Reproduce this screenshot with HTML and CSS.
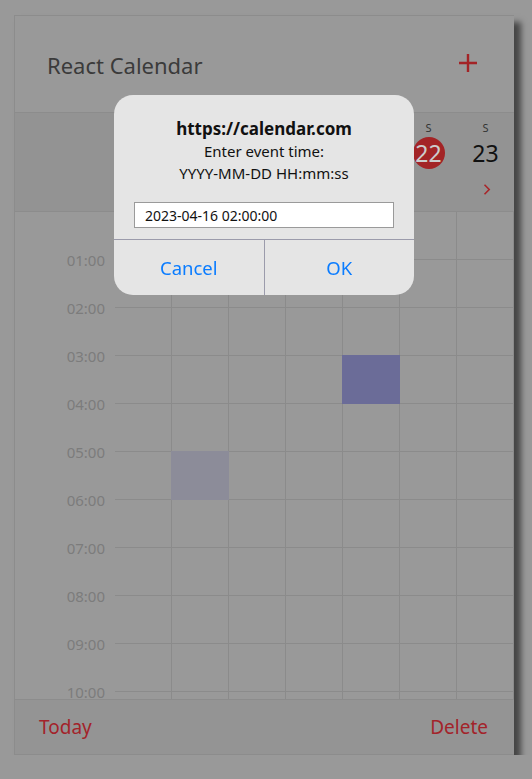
FILE: index.html
```html
<!DOCTYPE html>
<html lang="en">
<head>
<meta charset="utf-8">
<title>React Calendar</title>
<link rel="stylesheet" href="styles.css">
</head>
<body>
<div class="app">
  <header class="topbar">
    <h1 class="title">React Calendar</h1>
    <button class="add" aria-label="Add">
      <svg width="18" height="18" viewBox="0 0 18 18"><path d="M0 9H18M9 0V18" stroke="#a32326" stroke-width="2.4" fill="none"/></svg>
    </button>
  </header>

  <div class="week">
    <div class="week-spacer"></div>
    <div class="day"><span class="dow">M</span><span class="num">17</span><span class="nav"><svg width="8" height="11" viewBox="0 0 8 11"><path d="M6.5 0.8L1.8 5.5L6.5 10.2" stroke="#a8262a" stroke-width="1.6" fill="none"/></svg></span></div>
    <div class="day"><span class="dow">T</span><span class="num">18</span><span class="nav"></span></div>
    <div class="day"><span class="dow">W</span><span class="num">19</span><span class="nav"></span></div>
    <div class="day"><span class="dow">T</span><span class="num">20</span><span class="nav"></span></div>
    <div class="day"><span class="dow">F</span><span class="num">21</span><span class="nav"></span></div>
    <div class="day"><span class="dow">S</span><span class="num today">22</span><span class="nav"></span></div>
    <div class="day"><span class="dow">S</span><span class="num">23</span><span class="nav"><svg width="8" height="11" viewBox="0 0 8 11"><path d="M1.5 0.8L6.2 5.5L1.5 10.2" stroke="#a8262a" stroke-width="1.6" fill="none"/></svg></span></div>
  </div>

  <div class="body">
    <div class="times">
      <div class="time">01:00</div>
      <div class="time">02:00</div>
      <div class="time">03:00</div>
      <div class="time">04:00</div>
      <div class="time">05:00</div>
      <div class="time">06:00</div>
      <div class="time">07:00</div>
      <div class="time">08:00</div>
      <div class="time">09:00</div>
      <div class="time">10:00</div>
    </div>
    <div class="grid">
      <div class="event event-a"></div>
      <div class="event event-b"></div>
    </div>
  </div>

  <footer class="footer">
    <button class="link">Today</button>
    <button class="link">Delete</button>
  </footer>
</div>

<div class="dialog">
  <div class="dialog-title">https://calendar.com</div>
  <div class="dialog-msg">Enter event time:</div>
  <div class="dialog-msg">YYYY-MM-DD HH:mm:ss</div>
  <input class="dialog-input" type="text" value="2023-04-16 02:00:00">
  <div class="dialog-actions">
    <button class="dialog-btn">Cancel</button>
    <button class="dialog-btn">OK</button>
  </div>
</div>
</body>
</html>
```

FILE: styles.css
```css
* { box-sizing: border-box; }

html, body {
  margin: 0;
  padding: 0;
  background: #999999;
  font-family: "Noto Sans", "Open Sans", sans-serif;
  overflow: hidden;
}

button {
  font-family: inherit;
  background: none;
  border: none;
  padding: 0;
  margin: 0;
  cursor: pointer;
}

.app {
  margin: 15px 0 0 14px;
  width: 500px;
  height: 740px;
  border: 1px solid #8c8c8c;
  border-right: none;
  background: #999999;
  display: flex;
  flex-direction: column;
  box-shadow: 7px 7px 6px rgba(0, 0, 0, 0.55);
}

.topbar {
  height: 97px;
  flex: none;
  border-bottom: 1px solid #8c8c8c;
  display: flex;
  align-items: center;
  justify-content: space-between;
  padding: 2px 37px 0 32px;
}

.title {
  margin: 0;
  font-size: 22px;
  font-weight: 400;
  color: #3b3b3b;
}

.add {
  display: flex;
  width: 18px;
  height: 18px;
  margin-top: -5px;
}

.week {
  height: 99px;
  flex: none;
  background: #939393;
  border-bottom: 1px solid #8c8c8c;
  display: flex;
}

.week-spacer { width: 100px; flex: none; }

.day {
  width: 57px;
  flex: none;
  display: flex;
  flex-direction: column;
  align-items: center;
  padding-top: 8px;
}

.dow {
  height: 14px;
  line-height: 14px;
  font-size: 11px;
  color: #333333;
}

.num {
  margin-top: 2px;
  width: 32px;
  height: 32px;
  border-radius: 50%;
  display: flex;
  align-items: center;
  justify-content: center;
  font-size: 23px;
  color: #111111;
  line-height: 1;
}

.num.today {
  background: #a32426;
  color: #cdcdcd;
}

.nav {
  margin-top: 11px;
  height: 18px;
  display: flex;
  align-items: center;
  padding-left: 2px;
}

.body {
  flex: 1;
  display: flex;
  overflow: hidden;
}

.times {
  width: 100px;
  flex: none;
  padding-top: 24px;
  padding-right: 10px;
}

.time {
  height: 48px;
  display: flex;
  align-items: center;
  justify-content: flex-end;
  font-size: 15px;
  color: #7c7c7c;
}

.grid {
  width: 399px;
  flex: none;
  height: 1152px;
  display: grid;
  grid-template-columns: repeat(7, 57px);
  grid-template-rows: repeat(24, 48px);
  background-image:
    repeating-linear-gradient(to right, transparent 0 56px, #8b8b8b 56px 57px),
    repeating-linear-gradient(to bottom, transparent 0 47px, #8b8b8b 47px 48px);
}

.event { margin: -1px 0 0 -1px; }

.event-a {
  grid-column: 5;
  grid-row: 4;
  background: #6b6c98;
}

.event-b {
  grid-column: 2;
  grid-row: 6;
  background: #8c8c99;
}

.footer {
  height: 55px;
  flex: none;
  background: #949494;
  border-top: 1px solid #8c8c8c;
  display: flex;
  align-items: center;
  justify-content: space-between;
  padding: 0 26px 0 24px;
}

.link {
  font-size: 19px;
  color: #a3232a;
}

.dialog {
  position: fixed;
  left: 114px;
  top: 95px;
  width: 300px;
  height: 200px;
  background: #e5e5e5;
  border-radius: 19px;
  overflow: hidden;
  display: flex;
  flex-direction: column;
  align-items: center;
  padding-top: 23px;
}

.dialog-title {
  font-size: 17px;
  font-weight: 700;
  line-height: 22px;
  color: #111111;
}

.dialog-msg {
  font-size: 15px;
  line-height: 22px;
  color: #111111;
}

.dialog-input {
  margin-top: 18px;
  width: 260px;
  height: 26px;
  border: 1px solid #9a9a9a;
  background: #ffffff;
  padding: 0 10px;
  font-family: "Noto Sans", sans-serif;
  font-size: 14px;
  color: #111111;
  outline: none;
}

.dialog-actions {
  margin-top: 11px;
  align-self: stretch;
  flex: 1;
  display: flex;
  border-top: 1px solid #9b9bab;
}

.dialog-btn {
  flex: 1;
  font-size: 18.5px;
  color: #0a7cff;
}

.dialog-btn + .dialog-btn {
  border-left: 1px solid #9b9bab;
}
```
